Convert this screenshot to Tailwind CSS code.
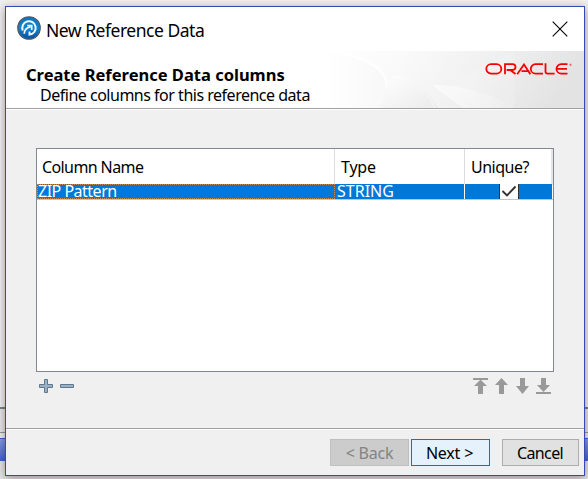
<!DOCTYPE html>
<html lang="en">
<head>
<meta charset="utf-8">
<title>New Reference Data</title>
<script src="https://cdn.jsdelivr.net/npm/@tailwindcss/browser@4"></script>
</head>
<body class="relative h-[479px] w-[588px] overflow-hidden bg-[#e9e9e9] font-['Noto_Sans',sans-serif] text-[16px] text-black">
<!-- window behind the dialog -->
<div class="absolute inset-0 flex flex-col">
  <div class="h-[407px] bg-[#f0f0f0]"></div>
  <div class="h-[2px] bg-[#7c8388]"></div>
  <div class="h-[23px] bg-[#e8e8e8]"></div>
  <div class="h-px bg-[#999]"></div>
  <div class="h-[5px] bg-[#eee]"></div>
  <div class="h-[23px] border-t border-[#405de0] bg-linear-to-b from-[#8a9ae0] to-[#4860cf]"></div>
  <div class="flex-1 bg-[#e6e6e6]"></div>
</div>
<main class="absolute left-[5px] top-[6px] flex h-[470px] w-[580px] flex-col border border-[#3449b4] bg-[#f0f0f0] shadow-[0_2px_9px_rgba(0,0,0,0.4)]">
  <header class="flex h-[44px] shrink-0 items-center bg-white pl-[11px] pr-[16px]">
    <svg class="mb-[3px] size-6 shrink-0" viewBox="0 0 24 24" fill="none">
      <defs><linearGradient id="g" x1="0" y1="0" x2="0" y2="1"><stop stop-color="#0875bd"/><stop offset=".5" stop-color="#0a86d8"/><stop offset="1" stop-color="#0b4f9e"/></linearGradient></defs>
      <circle cx="12" cy="12" r="11.2" fill="url(#g)" stroke="#4d5f70" stroke-width="1.3"/>
      <path d="M5.800 14.500A6.700 6.700 0 1 1 12.500 18.600V15.600" stroke="#eef7fd" stroke-width="2"/>
      <path d="M7.200 17.800C7.200 14.500 9 12 13.600 10.600M10.200 9.500h4.500v4.500" stroke="#eef7fd" stroke-width="1.700"/>
    </svg>
    <h1 class="ml-[5px] mt-[2px] text-[17.5px] leading-6 tracking-[-0.48px] whitespace-nowrap">New Reference Data</h1>
    <svg class="ml-auto mb-px size-4" viewBox="0 0 16 16" fill="none" stroke="#000" stroke-width="1.1"><path d="M.7.7l14.6 14.6M15.3.7L.7 15.3"/></svg>
  </header>
  <section class="relative h-[59px] shrink-0 border-b border-b-white bg-white">
    <svg class="absolute right-0 top-0 h-[57px] w-[258px]" viewBox="0 0 258 57">
      <defs>
        <linearGradient id="b" x1="0" x2="1" y1="0" y2=".15"><stop stop-color="#fff"/><stop offset=".3" stop-color="#fafafa"/><stop offset=".65" stop-color="#f0f0f0"/><stop offset="1" stop-color="#e3e3e3"/></linearGradient>
        <linearGradient id="c" x1="0" x2="1" y1="0" y2="1"><stop stop-color="#fff"/><stop offset="1" stop-color="#ebebeb"/></linearGradient>
        <linearGradient id="d" x1="0" x2="1"><stop stop-color="#fff" stop-opacity=".6"/><stop offset="1" stop-color="#fff" stop-opacity="0"/></linearGradient>
        <linearGradient id="e" x1="0" x2="1"><stop stop-color="#fff"/><stop offset="1" stop-color="#f8f8f8"/></linearGradient>
      </defs>
      <path d="M0 0h258v57H0z" fill="url(#b)"/>
      <path d="M6 0C39 6 63 18 60 37L57 57H0V0z" fill="url(#e)"/>
      <path d="M6 1C39 6 63 18 60 37" fill="none" stroke="#fff" stroke-width="2"/>
      <path d="M60 37C65 16 90 18 112 57H54z" fill="url(#c)"/>
      <path d="M64 22C83 22 99 36 109 57" fill="none" stroke="#f8f8f8"/>
      <path d="M106 34L137 57H192C165 44 140 34 106 34z" fill="url(#d)"/>
      <path d="M122 33L188 0v57H150z" fill="#fff" opacity=".14"/>
    </svg>
    <div class="relative flex h-[58px] flex-col border-b border-[#a0a0a0] pt-[13px]">
      <h2 class="pl-5 text-[16.5px] font-bold leading-[22px] tracking-[0px] whitespace-nowrap">Create Reference Data columns</h2>
      <p class="pl-[34px] text-[16px] leading-[19px] tracking-[-0.49px] whitespace-nowrap">Define columns for this reference data</p>
    </div>
    <svg class="absolute right-[11px] top-[12px] h-[12px] w-[88px]" viewBox="0 0 88 12" fill="none" stroke="#f80000" stroke-width="1.8" role="img" aria-label="Oracle">
      <rect x="1.3" y="1.2" width="15" height="9.4" rx="4.7"/>
      <path d="M20 11.3V1.2h7.6a2.9 2.9 0 0 1 0 5.8h-6M25.3 7l5.2 4"/>
      <path d="M32.2 11.3L39 1.5l6.4 9.8M36.5 8.2h6.2"/>
      <path d="M58 1.2h-7.5a4.7 4.7 0 0 0 0 9.4H58"/>
      <path d="M60.5.3v8.2c0 1.5.7 2.1 2.1 2.1h7"/>
      <path d="M82.500 1.2h-6.300a4.700 4.700 0 0 0 0 9.400h6.300M72.200 5.900h9.800"/>
      <circle cx="85.500" cy="1.800" r=".7" stroke-width=".6"/>
    </svg>
  </section>
  <section class="flex h-[318px] shrink-0 flex-col px-[30px] pt-[38px]">
    <div class="h-[224px] w-[518px] border border-[#828790] bg-white">
      <div class="grid h-[35px] grid-cols-[298px_130px_88px] leading-[35px] tracking-[-0.6px] whitespace-nowrap">
        <div class="border-r border-[#dcdcdc] pl-[5px] pt-px">Column Name</div>
        <div class="border-r border-[#dcdcdc] pl-[6px] pt-px tracking-[-0.2px]">Type</div>
        <div class="border-r-2 border-[#e5e5e5] pl-[6px] pt-px tracking-[-0.5px]">Unique?</div>
      </div>
      <div class="grid h-[16px] grid-cols-[298px_130px_87px] border-b border-[#c5c5c5] leading-[14px] text-white whitespace-nowrap">
        <div class="border border-dotted border-[#c08a50] bg-[#0078d7] leading-[12px] tracking-[-0.5px]">ZIP Pattern</div>
        <div class="border-r border-r-white bg-[#0078d7] pl-[2px] tracking-[0px]">STRING</div>
        <div class="flex justify-center bg-[#0078d7]">
          <svg class="h-[15px] w-[20px]" viewBox="0 0 20 15"><path d="M.5 0h19v15H.5z" fill="#fff"/><path d="M.5 0v15M19.500 0v15" stroke="#333"/><path d="M3.500 7l4.500 4.500L16.500 2.500" fill="none" stroke="#333" stroke-width="1.900"/></svg>
        </div>
      </div>
    </div>
    <div class="flex w-[518px] items-start pt-[5px]">
      <svg class="ml-[2px] mt-[2px] h-[15px] w-[36px]" viewBox="0 0 36 15" fill="#9bb0c5" stroke="#5e7890"><path d="M6.500.5h3v5h5v3h-5v5h-3v-5h-5v-3h5zM22.500 5.500h13v3h-13z"/></svg>
      <svg class="ml-auto mr-[3px] mt-px h-[16px] w-[79px]" viewBox="0 0 79 16" fill="#999">
        <path d="M1 0h15v2H1zM8.500 1.500l6.500 6.500h-4v8H6V8H2z"/>
        <path d="M29.500 0L36 7h-4v9h-5V7h-4z"/>
        <path d="M48 0h5v8h4l-6.500 8L44 8h4z"/>
        <path d="M69 0h5v7h4l-6.500 7L65 7h4zM64 14h15v2H64z"/>
      </svg>
    </div>
  </section>
  <footer class="flex flex-1 items-start border-t border-[#a0a0a0] shadow-[inset_0_1px_0_#fff] pl-[324px] pt-[10px] tracking-[-0.2px]">
    <button disabled class="h-[27px] w-[79px] border border-[#bfbfbf] bg-[#ccc] leading-[24px] text-[#838383] whitespace-nowrap">&lt; Back</button>
    <button class="ml-[2px] h-[27px] w-[79px] border border-[#0078d7] bg-[#e5f1fb] pr-[2px] leading-[24px] whitespace-nowrap">Next &gt;</button>
    <button class="ml-[12px] h-[27px] w-[77px] border border-[#adadad] bg-[#e1e1e1] pr-px leading-[24px] tracking-[-0.6px] whitespace-nowrap">Cancel</button>
  </footer>
</main>
</body>
</html>
